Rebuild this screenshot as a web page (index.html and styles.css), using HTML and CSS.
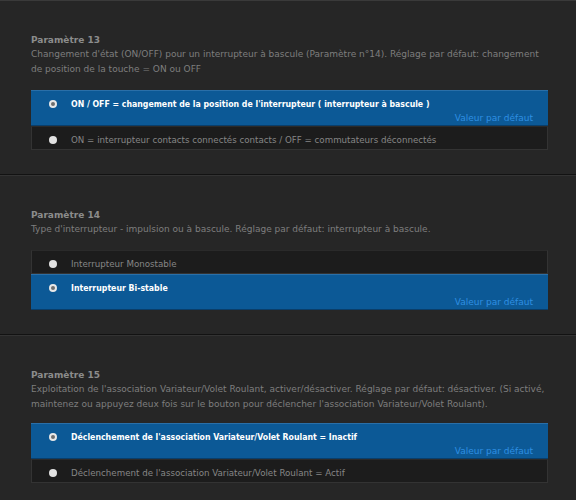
FILE: index.html
```html
<!DOCTYPE html>
<html lang="fr">
<head>
<meta charset="utf-8">
<link rel="stylesheet" href="styles.css">
</head>
<body>
<div class="page">
  <section class="param first">
    <div class="title">Paramètre 13</div>
    <div class="desc">Changement d'état (ON/OFF) pour un interrupteur à bascule (Paramètre n°14). Réglage par défaut: changement de position de la touche = ON ou OFF</div>
    <div class="options">
      <div class="opt selected">
        <div class="row"><span class="radio"></span><span class="label">ON / OFF = changement de la position de l'interrupteur ( interrupteur à bascule )</span></div>
        <div class="default">Valeur par défaut</div>
      </div>
      <div class="opt">
        <div class="row"><span class="radio"></span><span class="label">ON = interrupteur contacts connectés contacts / OFF = commutateurs déconnectés</span></div>
      </div>
    </div>
  </section>
  <section class="param">
    <div class="title">Paramètre 14</div>
    <div class="desc">Type d'interrupteur - impulsion ou à bascule. Réglage par défaut: interrupteur à bascule.</div>
    <div class="options">
      <div class="opt">
        <div class="row"><span class="radio"></span><span class="label">Interrupteur Monostable</span></div>
      </div>
      <div class="opt selected">
        <div class="row"><span class="radio"></span><span class="label">Interrupteur Bi-stable</span></div>
        <div class="default">Valeur par défaut</div>
      </div>
    </div>
  </section>
  <section class="param last">
    <div class="title">Paramètre 15</div>
    <div class="desc">Exploitation de l'association Variateur/Volet Roulant, activer/désactiver. Réglage par défaut: désactiver. (Si activé, maintenez ou appuyez deux fois sur le bouton pour déclencher l'association Variateur/Volet Roulant).</div>
    <div class="options">
      <div class="opt selected">
        <div class="row"><span class="radio"></span><span class="label">Déclenchement de l'association Variateur/Volet Roulant = Inactif</span></div>
        <div class="default">Valeur par défaut</div>
      </div>
      <div class="opt">
        <div class="row"><span class="radio"></span><span class="label">Déclenchement de l'association Variateur/Volet Roulant = Actif</span></div>
      </div>
    </div>
  </section>
</div>
</body>
</html>
```
FILE: styles.css
```css
html, body {
  margin: 0;
  padding: 0;
  background: #262626;
}
body {
  font-family: "DejaVu Sans", sans-serif;
  font-size: 9px;
  color: #808080;
}
.page {
  width: 576px;
  height: 500px;
  overflow: hidden;
}
.param {
  padding: 32px 28px 24px 31px;
  border-top: 1px solid #333333;
  border-bottom: 1px solid #121212;
}
.param.first {
  border-top: 1px solid #3a3a3a;
  padding-top: 32px;
}
.param.last {
  border-bottom: none;
  padding-top: 32px;
}
.title {
  font-weight: bold;
  color: #8c8c8c;
  line-height: 14px;
}
.desc {
  line-height: 15px;
  color: #7e7e7e;
}
.options {
  margin-top: 13px;
  width: 517px;
}
.param.last .options {
  margin-top: 11px;
}
.opt {
  background: #1c1c1c;
  border: 1px solid #333333;
  border-top-color: #2a2a2a;
  height: 22px;
}
.opt.selected {
  background: #0c5996;
  border: none;
  border-top: 1px solid #2a6fa8;
  border-bottom: 1px solid #0a3e6a;
  height: 33px;
  padding-top: 1px;
}
.row {
  display: flex;
  align-items: center;
  height: 22px;
  padding-top: 3px;
  box-sizing: border-box;
}
.selected .row {
  padding-top: 2px;
}
.radio {
  width: 8px;
  height: 8px;
  border-radius: 50%;
  background: #e2e2e2;
  margin-left: 17px;
  margin-right: 14px;
  flex: none;
  box-sizing: border-box;
}
.selected .radio {
  background: #6e6e6e;
  border: 2px solid #e8e8e8;
  margin-left: 18px;
}
.label {
  color: #868686;
  white-space: nowrap;
  font-size: 8.7px;
}
.selected .label {
  color: #ffffff;
  font-weight: bold;
  font-family: "DejaVu Sans Condensed", "DejaVu Sans", sans-serif;
  font-size: 8.7px;
}
.default {
  text-align: right;
  color: #2e8fe2;
  line-height: 10px;
  padding-right: 15px;
  margin-top: -1px;
}
```
